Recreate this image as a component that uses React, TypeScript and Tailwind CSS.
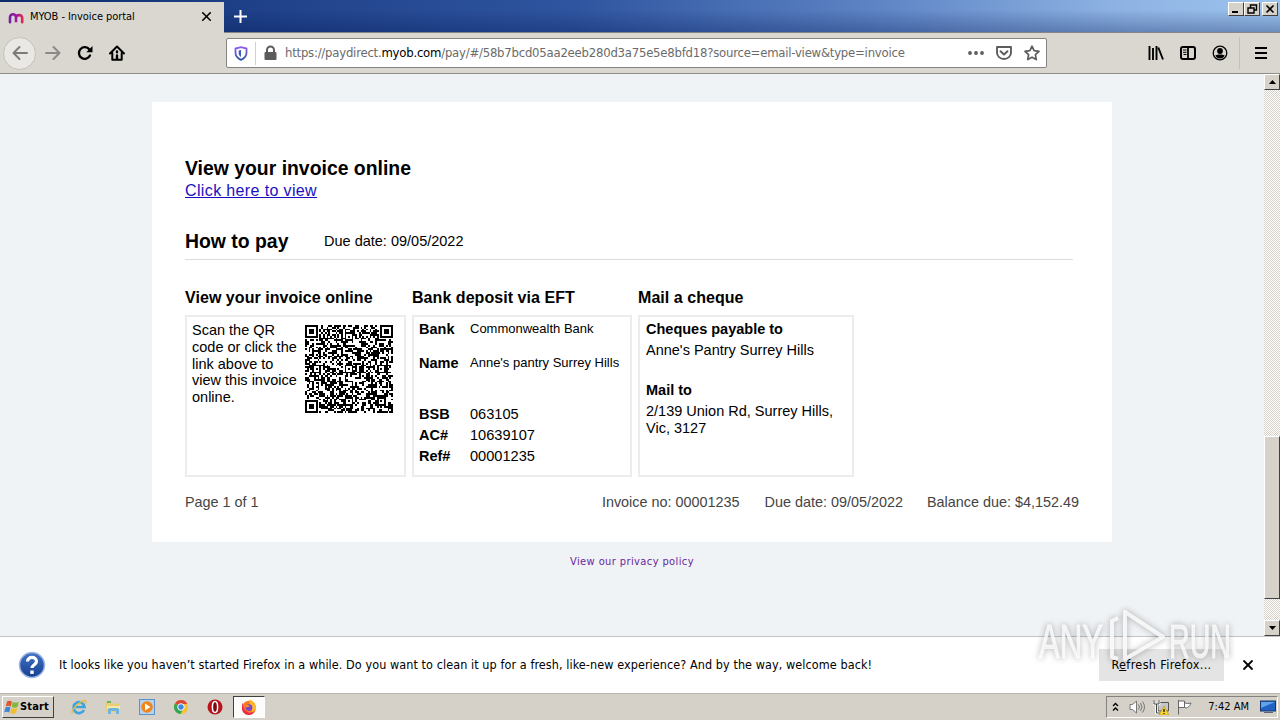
import React from 'react';
import { LuX } from 'react-icons/lu';

const QR_SIZE = 49;
const QR_ALIGN = [[24, 6], [6, 24], [24, 24], [42, 24], [24, 42], [42, 42]];

const isDark = (x: number, y: number) => {
  const corners = [[0, 0], [QR_SIZE - 7, 0], [0, QR_SIZE - 7]];
  for (const [cx, cy] of corners) {
    const dx = Math.abs(x - cx - 3);
    const dy = Math.abs(y - cy - 3);
    const d = Math.max(dx, dy);
    if (d <= 4) return d === 3 || d <= 1;
  }
  for (const [cx, cy] of QR_ALIGN) {
    const d = Math.max(Math.abs(x - cx), Math.abs(y - cy));
    if (d <= 2) return d !== 1;
  }
  if (x === 6 || y === 6) return (x + y) % 2 === 0;
  let h = (x * 374761393 + y * 668265263) | 0;
  h = Math.imul(h ^ (h >>> 13), 1274126177);
  return ((h ^ (h >>> 16)) & 255) < 138;
};

const QrCode: React.FC = () => {
  let d = '';
  for (let y = 0; y < QR_SIZE; y++) {
    for (let x = 0; x < QR_SIZE; x++) {
      if (isDark(x, y)) d += `M${x} ${y}h1v1h-1z`;
    }
  }
  return (
    <svg className="w-[88px] h-[88px] shrink-0" viewBox="0 0 49 49" shapeRendering="crispEdges">
      <path d={d} />
    </svg>
  );
};

const TitleBar: React.FC = () => (
  <div className="flex h-[33px] border-b border-[#85858a] bg-[linear-gradient(to_bottom,rgba(0,20,80,0)_30%,rgba(0,20,80,0.3)),linear-gradient(to_right,#0c2a6c,#1f4189_20%,#2f55a0_45%,#5d83c4_68%,#8fb4e4_88%,#9cc3ee)]">
    <div className="mt-0.5 -mb-px flex w-[224px] items-center bg-[#dad7d1] pl-2 pr-[10px]">
      <svg className="h-4 w-4" viewBox="0 0 16 16" fill="none" strokeWidth="2.6" strokeLinecap="round">
        <defs>
          <linearGradient id="myob" x1="0" x2="16" y1="0" y2="0" gradientUnits="userSpaceOnUse">
            <stop offset="0" stopColor="#6a1fa8" />
            <stop offset=".55" stopColor="#a11a9c" />
            <stop offset="1" stopColor="#ee2a4a" />
          </linearGradient>
        </defs>
        <path stroke="url(#myob)" d="M2 12.3V7.5a3 3.2 0 0 1 6 0v4.8V7.5a3.2 3.2 0 0 1 6.2 0v4.8" />
      </svg>
      <span className="ml-1.5 text-[11px] tracking-[-0.06px] whitespace-nowrap text-black">MYOB - Invoice portal</span>
      <LuX className="ml-auto h-[15px] w-[15px] -translate-y-px" strokeWidth={2.6} />
    </div>
    <svg className="ml-[9px] mt-[9px] h-[15px] w-[15px]" viewBox="0 0 15 15" stroke="#fff" strokeWidth="2">
      <path d="M7.5 1v13M1 7.5h13" />
    </svg>
    <div className="ml-auto mr-0.5 mt-0.5 flex">
      {['min', 'max', 'close'].map((kind) => (
        <div key={kind} className={`h-[14px] w-4 border border-b-[#404040] border-l-white border-r-[#404040] border-t-white bg-[#d6d2ca] ${kind === 'close' ? 'ml-[2px]' : ''}`}>
          <svg className="h-3 w-[14px]" viewBox="0 0 14 12" fill="none" stroke="#000" strokeWidth="1.6">
            {kind === 'min' && <path d="M3 9h6" strokeWidth="2" />}
            {kind === 'max' && <path d="M5.5 4.5V2h6v5H9M3 5h6v5H3z" strokeWidth="1.4" />}
            {kind === 'close' && <path d="M3.5 2.5l7 7m0-7l-7 7" />}
          </svg>
        </div>
      ))}
    </div>
  </div>
);

const Toolbar: React.FC = () => (
  <div className="flex h-[41px] items-center border-b border-[#8d8c87] bg-[#dad7d1]">
    <div className="ml-[3px] flex h-[33px] w-[33px] items-center justify-center rounded-full border border-[#c3c0ba] bg-[#eae8e4]">
      <svg className="h-4 w-4" viewBox="0 0 16 16" fill="none" stroke="#7c7b77" strokeWidth="2" strokeLinecap="round" strokeLinejoin="round">
        <path d="M15 8H1.5M7.5 2l-6 6 6 6" />
      </svg>
    </div>
    <svg className="ml-[9px] h-4 w-4" viewBox="0 0 16 16" fill="none" stroke="#8b8985" strokeWidth="2" strokeLinecap="round" strokeLinejoin="round">
      <path d="M1 8h13.500M8.500 2l6 6-6 6" />
    </svg>
    <svg className="ml-4 h-4 w-4" viewBox="0 0 16 16">
      <path d="M13 10.500A5.800 5.800 0 1 1 12.400 4.500" fill="none" stroke="#000" strokeWidth="2.300" strokeLinecap="round" />
      <path d="M15.500 1v6.200H9.300z" />
    </svg>
    <svg className="ml-4 h-4 w-4" viewBox="0 0 16 16" fill="none" stroke="#000" strokeWidth="2" strokeLinecap="round" strokeLinejoin="round">
      <path d="M1 8.500L8 1.500l7 7M3.300 8v6.800h9.400V8" />
      <path d="M8 14v-3.500M8 6.500v.8" strokeWidth="2.400" />
    </svg>
    <div className="ml-[101px] flex h-[30px] w-[821px] items-center rounded-[2px] border border-[#85837d] bg-white">
      <svg className="ml-[7px] h-[15px] w-[14px]" viewBox="0 0 14 15" fill="none">
        <defs>
          <linearGradient id="shield" x1="0" x2="0" y1="0" y2="1">
            <stop offset="0" stopColor="#8b5cf0" />
            <stop offset="1" stopColor="#2c57a8" />
          </linearGradient>
        </defs>
        <path d="M7 1.200L12.500 2.500v4.300c0 3-1.800 5.500-5.500 7-3.700-1.500-5.500-4-5.500-7V2.500z" stroke="url(#shield)" strokeWidth="1.800" />
        <path d="M7 4l-2.300.5v2.700c0 1.600.7 2.800 2.300 3.800z" fill="#3c5cc0" />
      </svg>
      <div className="ml-[7px] h-[23px] w-px bg-[#d0d0d0]" />
      <svg className="ml-2 h-4 w-[13px]" viewBox="0 0 13 16">
        <path d="M3 8V5a3.500 3.500 0 0 1 7 0v3" fill="none" stroke="#5c5c5c" strokeWidth="2" />
        <rect x=".5" y="7" width="12" height="8" rx="1" fill="#5c5c5c" />
      </svg>
      <span className="ml-2 w-[640px] whitespace-nowrap text-[13px] tracking-[-0.23px] text-[#6b6b6b]">
        https://paydirect.<span className="text-black">myob.com</span>/pay/#/58b7bcd05aa2eeb280d3a75e5e8bfd18?source=email-view&amp;type=invoice
      </span>
      <div className="ml-auto mr-[6px] flex items-center gap-3">
        <svg className="h-4 w-4" viewBox="0 0 16 16" fill="#5c5c5c">
          <circle cx="2" cy="8" r="1.900" /><circle cx="8" cy="8" r="1.900" /><circle cx="14" cy="8" r="1.900" />
        </svg>
        <svg className="h-4 w-4" viewBox="0 0 16 16" fill="none" stroke="#5c5c5c" strokeWidth="1.900" strokeLinecap="round" strokeLinejoin="round">
          <path d="M1 2h14v5.500a7 6.500 0 0 1-14 0zM4.500 6.200L8 9.500l3.500-3.300" />
        </svg>
        <svg className="h-4 w-4" viewBox="0 0 16 16" fill="none" stroke="#5c5c5c" strokeWidth="1.700" strokeLinejoin="round">
          <path d="M8 1.200l2.100 4.500 4.900.6-3.600 3.400.9 4.900L8 12.200l-4.300 2.400.9-4.900L1 6.300l4.900-.6z" />
        </svg>
      </div>
    </div>
    <div className="ml-auto mr-[13px] flex items-center">
      <svg className="h-4 w-4" viewBox="0 0 16 16" stroke="#000" strokeWidth="1.900">
        <path d="M1.500 1v14M5 3v12M8.500 1v14M10.300 2.500L15 14.500" />
      </svg>
      <svg className="ml-4 h-4 w-4" viewBox="0 0 16 16" fill="none" stroke="#000">
        <rect x="1" y="2" width="14" height="12" rx="2" strokeWidth="2" />
        <path d="M8 2v12" strokeWidth="1.800" /><path d="M3 5h3.500M3 7.300h3.500M3.500 9.500h3" />
      </svg>
      <svg className="ml-4 h-4 w-4" viewBox="0 0 16 16">
        <circle cx="8" cy="8" r="6.800" fill="none" stroke="#000" strokeWidth="1.300" />
        <circle cx="8" cy="6" r="2.900" />
        <path d="M3.300 10.500c1.500-.8 2.500-1 4.700-1s3.200.2 4.700 1C11.700 12.500 10 13.500 8 13.500s-3.700-1-4.700-3z" />
      </svg>
      <div className="ml-[11px] h-8 w-px bg-[#c3c0ba]" />
      <svg className="ml-[15px] h-[14px] w-[12px]" viewBox="0 0 12 14" stroke="#000" strokeWidth="2">
        <path d="M0 2h12M0 7h12M0 12h12" />
      </svg>
    </div>
  </div>
);

const ScrollArrow: React.FC<{ d: string }> = ({ d }) => (
  <div className="flex h-4 w-4 items-center justify-center border border-b-[#404040] border-l-white border-r-[#404040] border-t-white bg-[#d6d2ca]">
    <svg className="h-1 w-[7px]" viewBox="0 0 7 4"><path d={d} /></svg>
  </div>
);

const Scrollbar: React.FC = () => (
  <div className="flex w-4 flex-col bg-[repeating-conic-gradient(#fff_0_25%,#d6d2ca_0_50%)] bg-[length:2px_2px]">
    <ScrollArrow d="M0 4L3.500 0 7 4z" />
    <div className="mt-[346px] h-[163px] border border-b-[#404040] border-l-white border-r-[#404040] border-t-white bg-[#d6d2ca]" />
    <div className="mt-auto"><ScrollArrow d="M0 0h7L3.500 4z" /></div>
  </div>
);

const bankRows = [
  { label: 'Bank', value: 'Commonwealth Bank', row: 'h-[21px]', size: 'text-[13px] -mt-0.5' },
  { label: 'Name', value: "Anne's pantry Surrey Hills", row: 'h-[21px] mt-[13px]', size: 'text-[13px] -mt-0.5' },
  { label: 'BSB', value: '063105', row: 'h-[21px] mt-[30px]', size: 'text-[14.6px]' },
  { label: 'AC#', value: '10639107', row: 'h-[21px]', size: 'text-[14.6px]' },
  { label: 'Ref#', value: '00001235', row: 'h-[21px]', size: 'text-[14.6px]' },
];

const Invoice: React.FC = () => (
  <div className="ml-[152px] mt-7 h-[440px] w-[960px] bg-white pl-[33px] pt-[55px] font-['Liberation_Sans',sans-serif] text-[14.5px] text-black">
    <h2 className="text-[19.4px] font-bold leading-[22px]">View your invoice online</h2>
    <div className="pt-px text-base leading-[22px] tracking-[0.37px]">
      <a className="text-[#1a0fc0] underline">Click here to view</a>
    </div>
    <div className="mt-7 flex w-[888px] items-center border-b border-[#dcdcdc] pb-[7px]">
      <h2 className="w-[139px] text-[19.4px] font-bold leading-[22px]">How to pay</h2>
      <span className="leading-[22px]">Due date: 09/05/2022</span>
    </div>
    <div className="mt-7 flex gap-1.5">
      <div className="w-[221px]">
        <h3 className="text-base font-bold leading-5 tracking-[0.05px]">View your invoice online</h3>
        <div className="mt-[7px] flex h-[162px] justify-between border-2 border-[#ececec] pl-[5px] pr-[11px] pt-[5px] leading-[16.750px]">
          <p className="w-[108px]">Scan the QR<br />code or click the<br />link above to<br />view this invoice<br />online.</p>
          <div className="mt-[3px]"><QrCode /></div>
        </div>
      </div>
      <div className="w-[220px]">
        <h3 className="text-base font-bold leading-5 tracking-[0.05px]">Bank deposit via EFT</h3>
        <div className="mt-[7px] h-[162px] border-2 border-[#ececec] pl-[5px] pt-[2px]">
          {bankRows.map((r) => (
            <div key={r.label} className={`flex items-center whitespace-nowrap ${r.row}`}>
              <b className="w-[51px]">{r.label}</b>
              <span className={r.size}>{r.value}</span>
            </div>
          ))}
        </div>
      </div>
      <div className="w-[216px]">
        <h3 className="text-base font-bold leading-5 tracking-[0.05px]">Mail a cheque</h3>
        <div className="mt-[7px] h-[162px] border-2 border-[#ececec] pl-1.5 pt-[2px] leading-[21px]">
          <p className="font-bold">Cheques payable to</p>
          <p>Anne's Pantry Surrey Hills</p>
          <p className="mt-[19px] font-bold">Mail to</p>
          <p className="mt-0.5 leading-[17px]">2/139 Union Rd, Surrey Hills,<br />Vic, 3127</p>
        </div>
      </div>
    </div>
    <div className="mt-[14px] flex w-[894px] text-[14.4px] leading-[22px] text-[#444]">
      <span>Page 1 of 1</span>
      <span className="ml-auto">Invoice no: 00001235</span>
      <span className="ml-[25px]">Due date: 09/05/2022</span>
      <span className="ml-6">Balance due: $4,152.49</span>
    </div>
  </div>
);

const Watermark: React.FC = () => (
  <svg className="absolute left-[1030px] top-[600px] h-[72px] w-[212px] drop-shadow-[0_0_3px_rgba(0,0,0,0.4)]" viewBox="0 0 212 72" fill="none">
    <g fill="#fff" fillOpacity=".75" stroke="#fff" strokeOpacity=".6" strokeWidth="1.200" fontFamily="Liberation Sans, sans-serif" fontSize="48">
      <text x="9" y="58" textLength="64" lengthAdjust="spacingAndGlyphs">ANY</text>
      <text x="139" y="58" textLength="62" lengthAdjust="spacingAndGlyphs">RUN</text>
    </g>
    <path d="M95 12L133 37 95 59zM88 18l-6 3v36l6 2" stroke="#fff" strokeOpacity=".8" strokeWidth="4" strokeLinejoin="round" />
  </svg>
);

const NotificationBar: React.FC = () => (
  <div className="flex h-[57px] items-center border-t border-[#c4c4c4] bg-white">
    <svg className="ml-[18px] h-7 w-7" viewBox="0 0 28 28">
      <defs>
        <linearGradient id="help" x1="0" x2="0" y1="0" y2="1">
          <stop offset="0" stopColor="#4373c4" />
          <stop offset="1" stopColor="#173f92" />
        </linearGradient>
      </defs>
      <circle cx="14" cy="14" r="12.500" fill="url(#help)" stroke="#9db8e4" strokeWidth="1.500" />
      <path d="M9.500 10.500c0-5.500 9-5.500 9 0 0 3.200-4.500 3.200-4.500 6.500" fill="none" stroke="#fff" strokeWidth="3.200" />
      <rect x="12.300" y="19.500" width="3.400" height="3.400" fill="#fff" />
    </svg>
    <span className="ml-[13px] whitespace-nowrap text-[12.5px] tracking-[0.08px] text-black">
      It looks like you haven’t started Firefox in a while. Do you want to clean it up for a fresh, like-new experience? And by the way, welcome back!
    </span>
    <button className="ml-auto h-8 w-[125px] whitespace-nowrap bg-[#e4e4e4] text-[12.5px] tracking-[0.35px] text-black">
      R<span className="underline">e</span>fresh Firefox...
    </button>
    <LuX className="ml-[16px] mr-[24px] h-4 w-4" strokeWidth={2.700} />
  </div>
);

const Taskbar: React.FC = () => (
  <div className="flex h-[27px] items-center border-t border-[#b9b5ae] bg-[#d5d0c8] text-black">
    <div className="ml-0.5 flex h-[22px] w-[52px] items-center border border-b-[#404040] border-l-white border-r-[#404040] border-t-white pl-px">
      <svg className="h-4 w-4 shrink-0" viewBox="0 0 16 16">
        <path d="M3 2.500c2-1.300 3.500-1 5 0L6.800 7.500c-1.800-1-3.300-1-5 0z" fill="#e0572a" />
        <path d="M8.800 3c1.800 1 3.800 1 6 0l-1.300 5c-2 1-4 .8-5.800-.2z" fill="#7fb83c" />
        <path d="M1.500 8.500c1.700-1 3.300-1 5 0l-1.300 5c-1.700-1-3.300-1-5 0z" fill="#3f86d8" />
        <path d="M7.500 9c1.800 1 3.700 1 5.700 0l-1.300 5c-2 1-3.900 1-5.700 0z" fill="#f4bd2c" />
      </svg>
      <b className="text-[11px] tracking-[0.15px]">Start</b>
    </div>
    <div className="ml-[17px] flex items-center gap-[18px]">
      <svg className="h-4 w-4" viewBox="0 0 16 16" fill="none">
        <path d="M13 11A5.500 5.500 0 1 1 13.500 8H4" stroke="#3fa3dd" strokeWidth="2.600" />
        <path d="M1.500 14.500C-1 12 9 1.500 14.500 1.500c1 1 .5 2-.5 3.500" stroke="#e6bd3d" strokeWidth="1.300" />
      </svg>
      <svg className="h-4 w-4" viewBox="0 0 16 16">
        <path d="M1 3h5l1 1.500h7V13H1z" fill="#e8cf74" />
        <path d="M2 2h4v2H2z" fill="#69b562" />
        <path d="M2 7h13v3H2z" fill="#f6e8ab" />
        <path d="M3 15v-4.500q0-1.500 1.500-1.500h8q1.500 0 1.500 1.500V15h-3v-3H6v3z" fill="#6db4df" />
      </svg>
      <svg className="h-4 w-4" viewBox="0 0 16 16">
        <rect x=".5" y=".5" width="15" height="15" fill="#b5d2ee" stroke="#5c92cc" />
        <circle cx="8" cy="8" r="5.800" fill="#f08519" />
        <path d="M6 4.500l5.500 3.500L6 11.500z" fill="#fff" />
      </svg>
      <svg className="h-4 w-4" viewBox="0 0 16 16">
        <circle cx="8" cy="8" r="7" fill="#f5c42c" />
        <path d="M8 8L2 4.400A7 7 0 0 1 14.300 5H8z" fill="#dd4538" />
        <path d="M8 8L1.900 4.500A7 7 0 0 0 7.500 15l3-5.500z" fill="#34a455" />
        <circle cx="8" cy="8" r="3.300" fill="#4285e8" stroke="#fff" />
      </svg>
      <svg className="h-4 w-4" viewBox="0 0 16 16">
        <circle cx="8" cy="8" r="7.500" fill="#b8141c" />
        <ellipse cx="8" cy="8" rx="2.600" ry="5.500" fill="#7b0b10" stroke="#fff" strokeWidth="1.500" />
      </svg>
    </div>
    <div className="ml-[10px] flex h-[22px] w-8 items-center justify-center border border-b-white border-l-[#404040] border-r-white border-t-[#404040] bg-[#fcfcfb]">
      <svg className="h-4 w-4" viewBox="0 0 16 16">
        <circle cx="8" cy="8.800" r="7" fill="#fb7a24" />
        <path d="M9 .5c4 2 6.500 5 6 9.500-.4 3-3 5-5 5.500 2-3 2-7-2-9 .5-2 1-4 1-6z" fill="#fdb82c" />
        <path d="M1 9c0 9 12 9 13 2-2 3-6 4-9 1S2 6 2 3.500C1 5 1 7 1 9z" fill="#ed2c4d" />
        <circle cx="8" cy="8.600" r="3.300" fill="#7644ce" />
        <path d="M4.500 6.500c2-1 3.500 0 4.500 1-1.500 0-2 1-3.500 1z" fill="#fd8f28" />
      </svg>
    </div>
    <div className="ml-auto mr-0.5 flex h-[22px] w-[172px] items-center border border-b-white border-l-[#85837d] border-r-white border-t-[#85837d]">
      <svg className="ml-[5px] h-[10px] w-[7px]" viewBox="0 0 7 10" fill="none" stroke="#000" strokeWidth="1.400">
        <path d="M1 4l2.500-2.500L6 4M1 8.500L3.500 6 6 8.500" />
      </svg>
      <svg className="ml-[10px] h-4 w-4" viewBox="0 0 16 16" fill="none" stroke="#777">
        <path d="M1 5.500h2.500L7.500 2v12L3.500 10.500H1z" fill="#fff" />
        <path d="M9.500 5.500q2 2.500 0 5M11.500 4q3 4 0 8M13.500 2.500q4 5.500 0 11" />
      </svg>
      <svg className="ml-[8px] h-4 w-4" viewBox="0 0 16 16">
        <path d="M5 3.500h10.500V12H5z" fill="#c4c8cc" stroke="#555" />
        <path d="M1 1v4h5V1M3.500 5v9H7" fill="none" stroke="#fff" strokeWidth="2.600" />
        <path d="M1 1v4h5V1M3.500 5v9H7" fill="none" stroke="#444" />
        <path d="M11 7l5 9H6z" fill="#f9d72e" stroke="#b48a10" strokeWidth=".6" />
        <path d="M11 10v3M11 14v1" stroke="#000" strokeWidth="1.200" />
      </svg>
      <svg className="ml-[7px] h-4 w-4" viewBox="0 0 16 16" fill="#fff" stroke="#666">
        <path d="M2.500 1v14.500M2.500 2h6v6.500h-6M8.500 3.500c2 1.500 4 1 6.500.5-1 2-1.500 3.500-3.500 4.500-1 .5-2 .5-3 0" />
      </svg>
      <span className="ml-auto whitespace-nowrap text-[11px]">7:42 AM</span>
      <svg className="ml-[11px] mr-px h-[14px] w-4" viewBox="0 0 16 14">
        <rect x=".5" y="1" width="15" height="10" fill="#1e62c4" stroke="#16376d" />
        <path d="M1 2h14L1 8z" fill="#5fa3ec" />
        <path d="M4 12.500h9" stroke="#5f6570" />
      </svg>
    </div>
  </div>
);

export default function App() {
  return (
    <div className="relative flex h-[720px] w-[1280px] flex-col overflow-hidden bg-[#f0f3f6] font-['DejaVu_Sans_Condensed','DejaVu_Sans',sans-serif]">
      <TitleBar />
      <Toolbar />
      <div className="flex h-[562px]">
        <div className="flex-1">
          <Invoice />
          <div className="mt-3 text-center text-[11px] leading-4 tracking-[0.4px] text-[#6b1fa0]">View our privacy policy</div>
        </div>
        <Scrollbar />
      </div>
      <NotificationBar />
      <Taskbar />
      <Watermark />
    </div>
  );
}
